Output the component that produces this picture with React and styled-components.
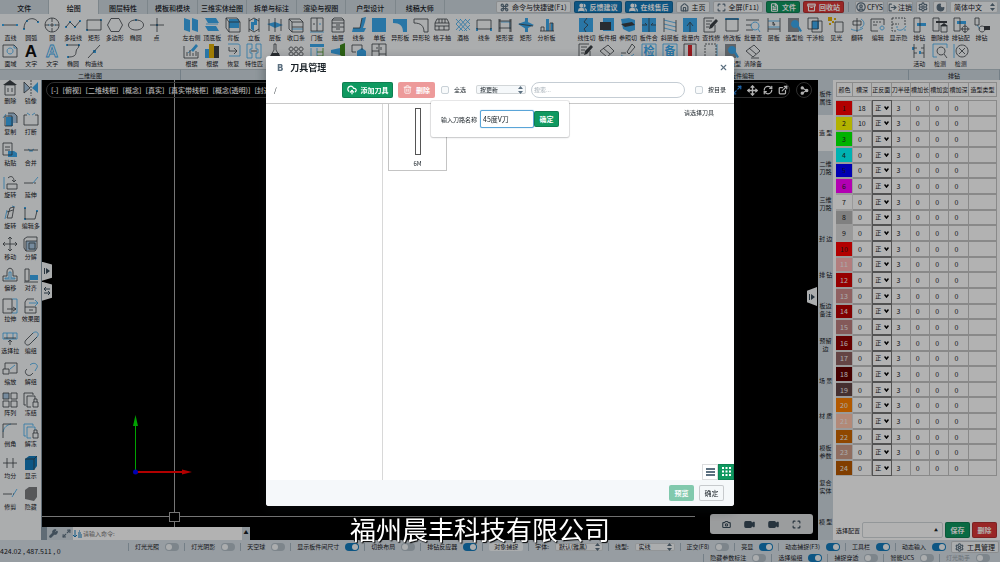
import { useState } from "react";
import styled, { createGlobalStyle, css } from "styled-components";
import {
    Command, House, Maximize, FileText, Archive, CircleUser, LogOut, Settings, Moon,
    Move, RefreshCw, ExternalLink, Share2, Wrench, Maximize2, Camera, Video,
    CloudUpload, Trash2, X, Users
} from "lucide-react";

const BLUE = "#3ba9ee";
const DARK = "#3b4045";

// k = dark stroke, b = blue stroke, fb = blue fill, fk = dark fill, t = letter
const icons = {
    line: { k: "M2 8H14", b: "M1 7v2M15 7v2", fb: "M0 7h2v2H0zM14 7h2v2h-2z" },
    arc: { k: "M1 12C1 1 11 -1 15 5", fb: "M0 11h2v2H0zM14 4h2v2h-2zM3 3h2v2H3z" },
    circle: { k: "M8 1a7 7 0 1 0 .1 0M8 1V5M8 11V15M1 8H5M11 8H15M6 8H10M8 6V10", b: "M4 8H6M10 8H12" },
    polyline: { k: "M1 10L5 5L10 10L15 4", fb: "M0 9h2v2H0zM4 4h2v2H4zM9 9h2v2H9zM14 3h2v2h-2z" },
    rect: { k: "M1 3H15V13H1Z", fb: "M0 12h2v2H0zM14 2h2v2h-2z" },
    hexagon: { k: "M4 1.500H12L15.500 8L12 14.500H4L.5 8Z" },
    ellipse: { k: "M8 3C-2 3 -2 13 8 13S18 3 8 3Z", fb: "M7 2h2v2H7z" },
    point: { k: "M1 8H15M8 1V15", fb: "M7 7h2v2H7z" },
    region: { k: "M1 2H12L15 5V14H1Z", b: "M8 5a3 3 0 1 0 .1 0M12 2V5H15" },
    textFill: { t: "A", tc: "#111" },
    textLine: { t: "A", tc: "none" },
    spline: { k: "M2 2H14C14 6 11 5 11 9S8 14 3 14", fb: "M1 1h2v2H1zM13 1h2v2h-2zM2 13h2v2H2z" },
    diagonal: { k: "M2 15L14 2", fb: "M7 7h3v3H7z" },
    sides: { fb: "M1 1L7 3V15L1 13ZM9 1L15 3V15L9 13Z" },
    topBottom: { fb: "M1 1H12L15 6H4ZM1 9H12L15 14H4Z", b: "M2 7H14" },
    back: { k: "M1 1H12L15 5V15H4L1 11ZM1 1L4 5H15M4 5V15", fb: "M4 2H14V11H4Z" },
    stand: { k: "M3 1V15M13 1V15M3 4L8 1L13 4M3 12L8 15L13 12", fb: "M5 5H8V14L5 12ZM8 2H11V8H8Z" },
    shelf: { k: "M2 2V14M14 2V14M8 1V15", fb: "M0 7L8 5L16 8L8 11Z" },
    closing: { k: "M1 2H12L15 5V15H4L1 12ZM4 5H15M4 5V15M1 2L4 5M4 10H15", b: "M4 12H15" },
    door: { k: "M2 1H14V14H2ZM8 1V14M4 7h2", b: "M10 7h2M1 15H15" },
    drawer: { k: "M2 3L4 1H12L14 3V15H2ZM2 6H14M2 10H14M6 8H10M6 12H10M2 3H14" },
    profile: { fb: "M11 1L15 0L14 5L12 11H15L13 15H1L2 11H9Z", k: "M11 1L9 11H2" },
    panel: { fb: "M1 1H15V15H1Z" },
    shaped: { fb: "M1 2H15V15H11C11 9 8 6 1 6Z" },
    shapedLine: { k: "M1 2H15V15H11C11 9 8 6 1 6Z" },
    lattice: { k: "M1 6L3 2H13L15 6V13H1ZM1 6H15M1 9H15M5 2V6M8 2V6M11 2V6M5 9v4M10 9v4" },
    wine: { b: "M1 2L12 14M5 2L15 13M10 2L15 7M1 7L8 14M15 2L4 14M11 2L1 13M6 2L1 7M15 8L9 14" },
    bar: { k: "M1 3H15V12H1Z", fb: "M0 11h2v3H0zM14 11h2v3h-2z" },
    frame: { k: "M2 2V15M14 2V15M2 11H14M2 4H14M3 2V15M13 2V15", b: "M4 5H13V12" },
    cross3d: { fb: "M0 7L8 4L16 8L8 12ZM7 1H10V15H7Z", k: "M1 7L15 9" },
    chart: { k: "M1 14H15M2 14V10H5V14M11 14V6H14V14", fb: "M7 2H10V14H7ZM12 6H14V14H12Z" },
    base: { k: "M1 3V15H15V9M4 9v4M7 7v6M10 10v3M13 8v5", b: "M5 10L14 2", fb: "M8 7L13 1L15 3L10 9Z" },
    bars: { fb: "M1 6H5V15H1Z", fk: "M10 3H15V15H10Z", fy: "M5 1H10V15H5Z" },
    restore: { k: "M4 4V8H12M9 5L12 8L9 11", b: "M3 1H13C15 1 15 3 15 3V13H4" },
    match: { b: "M1 1H6V6H4V10H6V15H1ZM15 1H10V6H12V10H10V15H15Z", k: "M5 8H11" },
    brush: { k: "M7 1H9V7L13 14H3L7 7Z", fk: "M5 10H12L13 14H3Z" },
    knots: { k: "M3 4a2 2 0 1 0 .1 0M8 4a2 2 0 1 0 .1 0M13 4a2 2 0 1 0 .1 0M3 9a2 2 0 1 0 .1 0M8 9a2 2 0 1 0 .1 0M13 9a2 2 0 1 0 .1 0" },
    shelves: { b: "M2 5V15M8 5V15", kg: "M14 5V15M8 9H14M8 13H14", fb: "M1 1H15V4H1Z" },
    green: { fb: "M1 7L10 5V12L1 10Z", fg: "M10 2L15 0V15L10 12Z" },
    cube: { k: "M1 2H11V7M1 2V9H5", fb: "M6 8L11 5L15 8V13L10 15L6 13Z" },
    cabinet: { k: "M1 1H15V15H1ZM8 1V15M1 8H8M8 11H15M10 4v3M6 4v2" },
    cutLine: { fb: "M1 1H15V15H1Z", k: "M9 1L6 5L10 8L6 12L8 15" },
    cutPart: { fb: "M4 1H15V14H4Z", fk: "M1 5H12V13H1Z" },
    cutRef: { fb: "M1 2L9 1L15 3V13L9 15L3 12Z", fk: "M1 7L12 5L15 8L5 10Z" },
    merge: { fb: "M1 1H15V15H1Z", k: "M1 8H6L4 6M15 8H10L12 6M8 1V15" },
    slope: { k: "M2 1V15M14 3V15", b: "M2 3L14 6M2 7L14 10M2 11L14 14" },
    batch: { fb: "M1 1H15V15H1Z", k: "M8 15V6M5 9L8 5L11 9" },
    edit: { k: "M12 8V15H1V1H11M3 4H9M3 7H7M3 10H6", fk: "M6 12L7 8L13 2L15 4L9 11Z" },
    modify: { k: "M2 2H14V14H2Z", fb: "M1 1H15V3H1Z" },
    find: { k: "M1 3H14M1 8H6M1 13H8", b: "M10 5a4 4 0 1 0 .1 0M13 12L15 15" },
    layers: { k: "M2 1V15M14 1V15M2 12H14M7 5L9 8H7Z", b: "M2 4H14M2 10H14" },
    modelCheck: { fg2: "M1 1H12V15H1Z", fb: "M8 3a4 4 0 1 0 .1 0M10 10L12 9L15 14L13 15Z" },
    clash: { k: "M1 1H11V12H1ZM5 4H15V15H5Z", fb: "M5 4H12V12H5Z" },
    light: { k: "M7 5H15V15H7Z", fy: "M0 0H4V4H0ZM6 1h2v2H6zM1 6h2v2H1zM4 4h2v2H4z" },
    flip: { k: "M8 1V15M4 4H12V8H4Z", b: "M2 12C5 14 11 14 14 11M12 2C17 5 15 10 11 11" },
    editBox: { k: "M1 2H14V8M1 2V14H8M3 5h2M6 5h2M9 5h2M3 8h4", b: "M12 9a2 2 0 1 0 .1 0" },
    showHide: { b: "M6 12C8 14 12 14 15 9M6 9v2M14 12v2", kd: "M1 1H14V8M1 1V14H5M1 7H8" },
    drill: { k: "M3 1H9V15H3Z", fb: "M6 6H15V9H6Z" },
    drillDel: { k: "M1 1H7V14H1ZM9 15H15V9H9Z", fk: "M4 4H15V6H4ZM8 9H16L12 6Z" },
    drillSet: { k: "M1 1H7V14H1ZM12 9a3 3 0 1 0 .1 0M12 7v9M7.500 12h9", fb: "M4 4H13V7H4Z" },
    drillArm: { k: "M1 1H5V8H1ZM8 9a3 3 0 1 0 .1 0", fk: "M10 9H16V13H10Z", b: "M3 8L6 12" },
    erase: { k: "M9 2L15 8L8 14L1 8ZM4 5L11 11M6 15H14" },
    scoop: { k: "M7 9L12 1L15 4L9 11ZM1 10H6M1 14H15", b: "M1 12C5 15 10 15 14 11" },
    checkChar: { t: "检", tc: BLUE, small: true, b: "M1 1H15V15H1Z" },
    noteChar: { t: "备", tc: BLUE, small: true, b: "M1 1H15V15H1Z" },
    redPart: { k: "M2 1H14V15H2Z", fr: "M6 2H10V14H6Z" },
    dotted: { kd: "M2 1H13V14H2Z", b: "M14 1V15" },
    rails: { k: "M3 1V15M13 1V15M3 5h3M3 10h3M10 5h3M10 10h3", fb: "M1 4h2v3H1zM8 8h2v3H8z" },
    scan: { b: "M1 1H15V5M1 1V14H5", k: "M9 4a4 4 0 1 0 .1 0M12 11L15 15" },
    ban: { k: "M9 2a6 6 0 1 0 .1 0M6 5L12 11M12 5L6 11", b: "M1 1V15" },
    trash: { k: "M3 5H13V15H3ZM6 8v4M10 8v4", fk: "M1 5H15L8 0Z" },
    mirror: { fl: "M1 2V13L7 8Z", k: "M1 2V13L7 8Z", kd: "M8 0V16", fb: "M15 2V13L9 8Z" },
    copy: { fl: "M6 2H12L15 5V12H11V6H6Z", k: "M6 2H12L15 5V12M3 5H10V15H3Z", fb: "M4 6H11V15H4Z", b: "M1 7L4 3" },
    breakIt: { k: "M4 4H1V14H15V4H12", b: "M4 2L7 4M12 2L9 4" },
    paste: { k: "M1 1H10V13H1ZM3 5h5M3 8h5", fb: "M6 9H12L15 11V15H6Z" },
    join: { k: "M1 8H15", b: "M5 7L8 9L11 7M6 9H10" },
    rotate: { k: "M5 10H15V15H5ZM6 4C9 1 12 3 12 7M10 6L12 8L14 6", b: "M2 3v12" },
    extend: { k: "M1 9H8", b: "M10 9L15 3", kd: "M8 9H13" },
    rotate3: { k: "M5 13L8 3L12 2L10 13ZM5 7L11 5", b: "M3 14L5 5M10 1L13 2" },
    editPoly: { k: "M2 3V14H12L14 6", fb: "M1 2h2v2H1zM1 13h2v2H1zM13 5h2v2h-2z" },
    move: { k: "M8 1V15M1 8H15M6 3L8 1L10 3M6 13L8 15L10 13M3 6L1 8L3 10M13 6L15 8L13 10" },
    explode: { k: "M1 3L4 1H14V12L12 15H3V5H14M1 3V12L3 15M6 7H12V13H6Z", fl: "M3 5H13V14H3Z" },
    offset: { k: "M1 14H15V9H11V5C11 0 5 0 5 5V9H1Z", b: "M3 12H13V11H9V5H7V11H3Z" },
    align: { k: "M2 2H6V14H2ZM1 15H15", fb: "M7 8H15V13H7Z" },
    stretch: { k: "M1 1H10V15H1ZM5 11H14M11 9L14 11L11 13", b: "M10 1H15V15H10" },
    render: { k: "M2 4L4 1H11M2 4V15H13V9M2 9H13M6 12h4", b: "M6 5H15M12 2L15 5L12 8" },
    pick: { b: "M1 3H15V9H1ZM5 3V9M11 3V9", k: "M8 10V15M6 12L8 10L10 12M2 8H14" },
    group: { k: "M10 3L3 10C0 13 4 17 7 14L14 7", b: "M10 3C14 0 17 4 14 7L10 11" },
    scale: { k: "M3 2H15V12H8M1 8H7V13H1ZM3 8V2", b: "M8 8L13 4" },
    ungroup: { k: "M4 8C0 11 4 16 8 14L10 12", b: "M7 4C11 0 17 4 13 8L12 10" },
    array: { k: "M9 1H15V7H9ZM1 9H7V15H1ZM9 9H15V15H9ZM1 1H7V7H1Z", fl: "M1 1H7V7H1Z" },
    freeze: { k: "M3 13H1V1H10V3M4 4H12V7M4 4V15H8M10 10H15V15H10ZM11 10V7H14V10" },
    chamfer: { k: "M1 15V6M6 1H15M1 6V1H6", b: "M1 9C2 4 5 2 9 1" },
    melt: { b: "M3 13H1V1H10V3M4 4H12V7M4 4V15H8", k: "M10 10H15V15H10ZM11 10V7H14V10" },
    divide: { k: "M1 8H15M5 3V13M11 3V13" },
    show: { fs: "M2 4L6 1H14V11L11 15H2Z", k: "M2 4H11V15M11 4L14 1" },
    trim: { k: "M1 8H8", b: "M10 11L15 3", kd: "M8 8H12" },
    hide: { fh: "M2 4L6 1H14V11L11 15L2 13Z" }
};

function ToolIcon({ name }) {
    const i = icons[name];
    return (
        <svg width="16" height="16" viewBox="0 0 16 16" fill="none" strokeWidth="0.8" overflow="visible" aria-hidden="true">
            {i.fl && <path d={i.fl} fill="#a9c8e2" />}
            {i.fg2 && <path d={i.fg2} fill="#8a9096" />}
            {i.fb && <path d={i.fb} fill={BLUE} />}
            {i.fs && <path d={i.fs} fill="#137cbd" />}
            {i.fy && <path d={i.fy} fill="#e2b007" />}
            {i.fg && <path d={i.fg} fill="#3f8a1c" />}
            {i.fr && <path d={i.fr} fill="#d8262c" />}
            {i.fh && <path d={i.fh} fill="#7b7d80" />}
            {i.fk && <path d={i.fk} fill={DARK} />}
            {i.b && <path d={i.b} stroke={BLUE} />}
            {i.k && <path d={i.k} stroke={DARK} />}
            {i.kg && <path d={i.kg} stroke="#3f8a1c" />}
            {i.kd && <path d={i.kd} stroke={DARK} strokeDasharray="2 1" />}
            {i.t && <Letter x="8" y={i.small ? 12 : 14} $small={i.small}
                fill={i.tc} stroke={i.tc === "none" ? BLUE : "none"}>{i.t}</Letter>}
        </svg>
    );
}

const tabs = ["文件", "绘图", "图层特性", "模板和模块", "三维实体绘图", "拆单与标注", "渲染与视图", "户型设计", "线稿大师"];

const ribbon = [
    {
        title: "二维绘图", cols: 8, pad: 14,
        tools: [
            ["直线", "line"], ["圆弧", "arc"], ["圆", "circle"], ["多段线", "polyline"], ["矩形", "rect"], ["多边形", "hexagon"], ["椭圆", "ellipse"], ["点", "point"],
            ["面域", "region"], ["文字", "textFill"], ["文字", "textLine"], ["椭圆", "spline"], ["构造线", "diagonal"]
        ]
    },
    {
        title: "", cols: 18, pad: 19,
        tools: [
            ["左右侧", "sides"], ["顶底板", "topBottom"], ["背板", "back"], ["立板", "stand"], ["层板", "shelf"], ["收口条", "closing"], ["门板", "door"], ["抽屉", "drawer"], ["线条", "profile"],
            ["单板", "panel"], ["异形板", "shaped"], ["异形轮", "shapedLine"], ["格子抽", "lattice"], ["酒格", "wine"], ["线条", "bar"], ["矩形变", "frame"], ["矩形", "cross3d"], ["分析板", "chart"],
            ["根据", "base"], ["根据", "bars"], ["恢复", "restore"], ["特性匹", "match"], ["", "brush"], ["", "knots"], ["", "shelves"], ["", "green"], ["", "cube"], ["", "cabinet"]
        ]
    },
    {
        title: "板件编辑", cols: 16, pad: 0,
        tools: [
            ["线性切", "cutLine"], ["板件相", "cutPart"], ["参照切", "cutRef"], ["板件合", "merge"], ["斜层板", "slope"], ["批量内", "batch"], ["查找修", "edit"], ["修改板", "modify"],
            ["批量查", "find"], ["层板", "layers"], ["造型检", "modelCheck"], ["干涉检", "clash"], ["见光", "light"], ["翻转", "flip"], ["编辑", "editBox"], ["显示隐", "showHide"],
            ["", "edit"], ["", "erase"], ["", "scoop"], ["", "checkChar"], ["", "noteChar"], ["", "redPart"], ["", "dotted"], ["改造型", "modelCheck"], ["清除备", "erase"]
        ]
    },
    {
        title: "排钻", cols: 4, pad: 8,
        tools: [
            ["排钻", "drill"], ["删除排", "drillDel"], ["排钻配", "drillSet"], ["排钻", "drillArm"],
            ["活动", "rails"], ["检测", "scan"], ["检测", "ban"]
        ]
    }
];

const sideTools = [
    ["删除", "trash"], ["镜像", "mirror"], ["复制", "copy"], ["打断", "breakIt"], ["粘贴", "paste"], ["合并", "join"], ["旋转", "rotate"],
    ["延伸", "extend"], ["旋转", "rotate3"], ["编辑多", "editPoly"], ["移动", "move"], ["分解", "explode"], ["偏移", "offset"], ["对齐", "align"],
    ["拉伸", "stretch"], ["效果图", "render"], ["选择拉", "pick"], ["编组", "group"], ["缩放", "scale"], ["解组", "ungroup"], ["阵列", "array"],
    ["冻结", "freeze"], ["倒角", "chamfer"], ["解冻", "melt"], ["均分", "divide"], ["显示", "show"], ["修剪", "trim"], ["隐藏", "hide"]
];

const views = ["[-]", "[俯视]", "[二维线框]", "[概念]", "[真实]", "[真实带线框]", "[概念(透明)]", "[封边]"];

const panelTabs = ["板件 属性", "造 型", "二维 刀路", "三维 刀路", "封 边", "排 钻", "板边 备注", "预留 边", "场 景", "材 质", "模板 参数", "复合 实体", "模 型"];

const heads = ["颜色", "槽深", "正反面", "刀半径", "槽加长", "槽加宽", "槽加深", "造型类型"];

const colors = [
    "#ff0000", "#ffff00", "#00ff00", "#00ffff", "#0000ff", "#ff00ff", "#ffffff", "#b8b8b8",
    "#dcdcdc", "#ff0000", "#ffb4b4", "#d70000", "#cd8c8c", "#b90000", "#bd8080", "#910000",
    "#906262", "#640000", "#644646", "#ff8000", "#ffc4ac", "#cd6600", "#cd9c88", "#b95a00"
];

function Toggle({ text, on, faded }) {
    return (
        <StatusItem $faded={faded}>
            {text}
            <Switch type="checkbox" role="switch" defaultChecked={on} disabled={faded} />
        </StatusItem>
    );
}

function Header() {
    return (
        <TopBar>
            <Tabs>
                {tabs.map((t, i) => <Tab key={t} $active={i === 1}>{t}</Tab>)}
            </Tabs>
            <TopActions>
                <TopButton><Command size={9} />命令与快捷键(F1)</TopButton>
                <TopButton $color="#137cbd"><Users size={9} fill="#fff" />反馈建议</TopButton>
                <TopButton $color="#137cbd"><Users size={9} fill="#fff" />在线售后</TopButton>
                <TopButton><House size={9} />主页</TopButton>
                <TopButton><Maximize size={9} />全屏(F11)</TopButton>
                <TopButton $color="#0f9960"><FileText size={9} />文件</TopButton>
                <TopButton $color="#db3737"><Archive size={9} />回收站</TopButton>
                <Divider />
                <TopButton $tight><CircleUser size={10} />CFYS</TopButton>
                <TopButton $tight><LogOut size={9} />注销</TopButton>
                <TopButton $tight aria-label="设置"><Settings size={10} /></TopButton>
                <TopButton $tight aria-label="夜间模式"><Moon size={9} fill="#5c7080" /></TopButton>
                <PickBox $w={48} $h={12} $size={7}>
                    <select aria-label="语言" defaultValue="简体中文"><option>简体中文</option></select>
                    <Arrows />
                </PickBox>
            </TopActions>
        </TopBar>
    );
}

function Arrows() {
    return (
        <svg width="5" height="8" viewBox="0 0 5 8" fill="#5c7080" aria-hidden="true">
            <path d="M0 3L2.500 0L5 3ZM0 5H5L2.500 8Z" />
        </svg>
    );
}

function Viewport() {
    return (
        <Canvas>
            <Drawing aria-hidden="true">
                <g stroke="#a8a8a8" fill="none" shapeRendering="crispEdges">
                    <path d="M132.500 0V432M132.500 442V460M0 436.500H127M138 436.500H653" />
                    <rect x="127.500" y="432.500" width="10" height="9" />
                </g>
                <path d="M93.500 392V346" stroke="#00e800" />
                <path d="M93.500 335L96 346H91Z" fill="#00e800" />
                <path d="M94 392H141" stroke="#ff0000" strokeWidth="2" />
                <path d="M150 392L140 389.500V394.500Z" fill="#ff0000" />
                <circle cx="93.500" cy="392" r="2.500" fill="#0000ff" />
            </Drawing>
            <ViewRow>
                <ViewPill>
                    {views.map((v) => <ViewButton key={v}>{v}</ViewButton>)}
                    <ViewIcons>
                        <Maximize2 size={10} color="#2b95ff" /><Move size={11} /><RefreshCw size={10} /><ExternalLink size={10} />
                    </ViewIcons>
                </ViewPill>
                <RoundButton aria-label="分享"><Share2 size={9} fill="#fff" /></RoundButton>
            </ViewRow>
            <Handles>
                <Handle aria-label="展开">
                    <svg width="6" height="8" viewBox="0 0 6 8"><path d="M0 1H1V7H0ZM2 1L6 4L2 7Z" fill="#394b59" /></svg>
                </Handle>
                <Handle aria-label="切换">
                    <svg width="6" height="8" viewBox="0 0 6 8">
                        <path d="M0 2H6M2 0L0 2L2 4M6 6H0M4 4L6 6L4 8" fill="none" stroke="#394b59" />
                    </svg>
                </Handle>
            </Handles>
            <Handles $right>
                <Handle $right aria-label="收起">
                    <svg width="6" height="8" viewBox="0 0 6 8"><path d="M0 1H1V7H0ZM2 1L6 4L2 7Z" fill="#394b59" /></svg>
                </Handle>
            </Handles>
            <CameraBar>
                <Camera size={9} /><Video size={11} fill="#394b59" /><Video size={11} fill="#394b59" /><Maximize size={9} />
            </CameraBar>
            <CommandBar>
                <CommandTools><Wrench size={9} fill="#5c7080" /><Maximize2 size={9} /></CommandTools>
                <svg width="9" height="9" viewBox="0 0 9 9" stroke="#137cbd" aria-hidden="true">
                    <path d="M2 1V8M0 6L2 8L4 6M6 2H7M5 4H8M5 6H9M5 8H9" fill="none" />
                </svg>
                <input aria-label="命令" placeholder="请输入命令:" />
                <CommandToggle>▲</CommandToggle>
            </CommandBar>
        </Canvas>
    );
}

function ToolPanel() {
    return (
        <Panel>
            <TableArea>
                <DataTable>
                    <colgroup>
                        <col style={{ width: "10.500%" }} />
                        {heads.slice(1, 7).map((h) => <col key={h} style={{ width: "12%" }} />)}
                        <col />
                    </colgroup>
                    <thead>
                        <tr>{heads.map((h) => <th key={h}><span>{h}</span></th>)}</tr>
                    </thead>
                    <tbody>
                        {colors.map((c, i) => (
                            <tr key={i}>
                                <ColorCell style={{ backgroundColor: c }} $light={i > 9}>{i + 1}</ColorCell>
                                <td>{i === 0 ? 18 : i === 1 ? 10 : 0}</td>
                                <SelectCell>
                                    <SideSelect>
                                        <select aria-label={"正反面" + (i + 1)} defaultValue="正"><option>正</option><option>反</option></select>
                                        <svg width="5" height="4" viewBox="0 0 5 4"><path d="M.5 .5L2.500 3L4.500 .5" fill="none" stroke="#000" strokeWidth="1.500" /></svg>
                                    </SideSelect>
                                </SelectCell>
                                <td>3</td><td>0</td><td>0</td><td>0</td><td></td>
                            </tr>
                        ))}
                    </tbody>
                </DataTable>
            </TableArea>
            <ConfigRow>
                <label htmlFor="config">选择配置</label>
                <Combo><input id="config" /><span>▲</span></Combo>
                <Button $color="#0f9960">保存</Button>
                <Button $color="#db3737">删除</Button>
            </ConfigRow>
        </Panel>
    );
}

function StatusBar() {
    return (
        <Status>
            <Coords>424.02 , 487.511 , 0</Coords>
            <StatusRows>
                <StatusRow>
                    <Toggle text="灯光光照" />
                    <Toggle text="灯光阴影" />
                    <Toggle text="天空球" />
                    <Toggle text="显示板件间尺寸" on />
                    <Toggle text="切换布局" />
                    <Toggle text="排钻反应器" on />
                    <StatusItem as="div"><SmallButton>对象捕捉</SmallButton></StatusItem>
                    <StatusItem>字体:
                        <PickBox $w={48} $h={8} $size={6}><select><option>默认(雅黑)</option></select><Arrows /></PickBox>
                    </StatusItem>
                    <StatusItem>线型:
                        <PickBox $w={40} $h={8} $size={6}><select><option>实线</option></select><Arrows /></PickBox>
                    </StatusItem>
                    <Toggle text="正交(F8)" />
                    <Toggle text="亮显" on />
                    <Toggle text="动态捕捉(F3)" on />
                    <Toggle text="工具栏" on />
                    <Toggle text="动态输入" on />
                    <TopButton><Settings size={9} />工具管理</TopButton>
                </StatusRow>
                <StatusRow $pad={5}>
                    <Toggle text="隐藏参数标注" />
                    <Toggle text="选择编组" on />
                    <Toggle text="捕捉穿透" />
                    <Toggle text="智能UCS" />
                    <Toggle text="灯光助手" faded />
                </StatusRow>
            </StatusRows>
        </Status>
    );
}

function ToolDialog() {
    const [name, setName] = useState("45度V刀");
    return (
        <Backdrop>
            <Dialog role="dialog" aria-label="刀具管理">
                <DialogHead>
                    <b>B</b>
                    <h1>刀具管理</h1>
                    <button aria-label="关闭"><X size={9} strokeWidth={3} /></button>
                </DialogHead>
                <DialogTools>
                    <Path>/</Path>
                    <Button $color="#0f9960" $w={51}><CloudUpload size={10} strokeWidth={3} />添加刀具</Button>
                    <Button $color="#db3737" $w={37} disabled><Trash2 size={9} />删除</Button>
                    <Check><input type="checkbox" />全选</Check>
                    <PickBox $w={50} $h={9} $size={6}>
                        <select aria-label="排序"><option>按更新</option></select><Arrows />
                    </PickBox>
                    <Search type="search" aria-label="搜索" placeholder="搜索..." />
                    <Check><input type="checkbox" />按目录</Check>
                </DialogTools>
                <DialogBody>
                    <Tree />
                    <Cards>
                        <Card>
                            <svg width="8" height="49" aria-hidden="true">
                                <rect x="1.500" y="1.500" width="5" height="46" fill="none" stroke="#555" />
                            </svg>
                            6M
                        </Card>
                    </Cards>
                    <Hint>请选择刀具</Hint>
                    <Popover>
                        <label htmlFor="toolName">输入刀路名称</label>
                        <input id="toolName" autoFocus value={name} onChange={(e) => setName(e.target.value)} />
                        <Button $color="#0f9960">确定</Button>
                    </Popover>
                    <ModeSwitch>
                        <ModeButton aria-label="列表">
                            <svg width="9" height="8" viewBox="0 0 9 8"><path d="M0 1H9M0 4H9M0 7H9" stroke="#5c7080" strokeWidth="2" /></svg>
                        </ModeButton>
                        <ModeButton $active aria-label="网格">
                            <svg width="9" height="9" viewBox="0 0 9 9">
                                <path d="M0 1H9M0 4.500H9M0 8H9" stroke="#fff" strokeWidth="2" strokeDasharray="2 1.500" />
                            </svg>
                        </ModeButton>
                    </ModeSwitch>
                </DialogBody>
                <DialogFoot>
                    <Button $color="#0f9960" disabled>预览</Button>
                    <Button>确定</Button>
                </DialogFoot>
            </Dialog>
        </Backdrop>
    );
}

export default function App() {
    return (
        <Page>
            <Global />
            <Header />
            <Ribbon>
                {ribbon.map((g, n) => (
                    <Group key={n}>
                        <Tools $cols={g.cols} $pad={g.pad}>
                            {g.tools.map(([label, icon], i) => (
                                <Tool key={i}><ToolIcon name={icon} /><span>{label}</span></Tool>
                            ))}
                        </Tools>
                        <GroupTitle>{g.title}</GroupTitle>
                    </Group>
                ))}
            </Ribbon>
            <Main>
                <Side>
                    {sideTools.map(([label, icon], i) => (
                        <Tool key={i}><ToolIcon name={icon} /><span>{label}</span></Tool>
                    ))}
                </Side>
                <Viewport />
                <PanelTabs>
                    {panelTabs.map((t, i) => <PanelTab key={t} $active={i === 1} $wide={t.length === 3 && t[1] === " "}>{t}</PanelTab>)}
                </PanelTabs>
                <ToolPanel />
            </Main>
            <StatusBar />
            <ToolDialog />
            <Caption>福州晨丰科技有限公司</Caption>
        </Page>
    );
}

const Global = createGlobalStyle`
    * {
        box-sizing: border-box;
    }
    body {
        margin: 0;
        background: #000;
    }
    body, button, input, select {
        font-family: "Noto Sans CJK SC", "Noto Sans", sans-serif;
        font-size: 6px;
        color: #182026;
    }
    button {
        padding: 0;
        border: 0;
        background: none;
        white-space: nowrap;
    }
    svg {
        flex: none;
    }
`
const Letter = styled.text`
    font-family: "Liberation Sans", "Noto Sans CJK SC", sans-serif;
    font-size: ${(props) => props.$small ? "11px" : "17px"};
    font-weight: 700;
    text-anchor: middle;
`
const Page = styled.div`
    display: flex;
    flex-direction: column;
    height: 100vh;
    overflow: hidden;
`
const TopBar = styled.header`
    display: flex;
    justify-content: space-between;
    height: 14px;
    background: #ced9e0;
`
const Tabs = styled.nav`
    display: flex;
    width: 44.5%;
`
const Tab = styled.button`
    flex: 1;
    padding-top: 2px;
    font-size: 7px;
    font-weight: 500;
    line-height: 10px;
    border-right: 1px solid #b4c0c8;
    background: ${(props) => props.$active ? "#f5f8fa" : "none"};
`
const TopActions = styled.div`
    display: flex;
    align-items: center;
    gap: 3px;
    padding-right: 2px;
`
const TopButton = styled.button`
    display: flex;
    align-items: center;
    justify-content: center;
    gap: ${(props) => props.$tight ? "1px" : "3px"};
    height: 12px;
    min-width: 14px;
    padding: 0 ${(props) => props.$tight ? "1px" : "4px"};
    font-size: 7px;
    font-weight: ${(props) => props.$color ? 700 : 400};
    color: ${(props) => props.$color ? "#fff" : "#182026"};
    background: ${(props) => props.$color || "#f5f8fa"};
    border-radius: 2px;
    box-shadow: inset 0 0 0 1px rgba(16, 22, 26, 0.2);
    svg {
        stroke-width: 3px;
        color: ${(props) => props.$color ? "#fff" : "#5c7080"};
    }
`
const Divider = styled.span`
    width: 1px;
    height: 10px;
    margin: 0 3px 0 1px;
    background: #a7b6c2;
`
const PickBox = styled.span`
    position: relative;
    display: inline-flex;
    width: ${(props) => props.$w}px;
    height: ${(props) => props.$h}px;
    select {
        appearance: none;
        width: 100%;
        padding: 0 8px 0 4px;
        font-size: ${(props) => props.$size}px;
        line-height: ${(props) => props.$h}px;
        border: 0;
        border-radius: 2px;
        background: #f5f8fa;
        box-shadow: inset 0 0 0 1px rgba(16, 22, 26, 0.15);
    }
    svg {
        position: absolute;
        right: 3px;
        top: 50%;
        margin-top: -4px;
        pointer-events: none;
    }
`
const Ribbon = styled.section`
    display: grid;
    grid-template-columns: 181fr 395fr 333fr 91fr;
    background: #f5f8fa;
`
const Group = styled.div`
    min-width: 0;
`
const Tools = styled.div`
    display: grid;
    grid-template-columns: repeat(${(props) => props.$cols}, minmax(0, 1fr));
    grid-auto-rows: 26px;
    height: 55px;
    padding: 3px ${(props) => props.$pad}px 0 0;
`
const Tool = styled.button`
    display: flex;
    flex-direction: column;
    align-items: center;
    min-width: 0;
    span {
        line-height: 10px;
    }
`
const GroupTitle = styled.div`
    height: 11px;
    line-height: 11px;
    text-align: center;
    background: #ced9e0;
    border-top: 1px solid #b8c4cc;
    border-right: 1px solid #a7b6c2;
`
const Main = styled.main`
    display: flex;
    flex: 1;
    min-height: 0;
`
const Side = styled.aside`
    display: grid;
    grid-template-columns: 1fr 1fr;
    grid-template-rows: repeat(14, minmax(0, 1fr));
    width: 42px;
    padding-bottom: 23px;
    background: #f5f8fa;
    border-right: 1px solid #8a9ba8;
`
const Canvas = styled.section`
    position: relative;
    flex: 1;
    min-width: 0;
    background: #000;
`
const Drawing = styled.svg`
    position: absolute;
    inset: 0;
    width: 100%;
    height: 100%;
`
const ViewRow = styled.div`
    position: relative;
    display: flex;
    gap: 6px;
    padding: 2px 6px 0 4px;
`
const ViewPill = styled.div`
    display: flex;
    align-items: center;
    flex: 1;
    gap: 4px;
    height: 16px;
    padding: 0 1px 0 4px;
    border: 1px solid #444;
    border-radius: 8px;
`
const ViewButton = styled.button`
    font-size: 7px;
    font-weight: 500;
    color: #fff;
`
const ViewIcons = styled.div`
    display: flex;
    align-items: center;
    gap: 5px;
    margin-left: auto;
    color: #fff;
    svg {
        stroke-width: 3px;
    }
`
const RoundButton = styled.button`
    display: flex;
    align-items: center;
    justify-content: center;
    width: 16px;
    height: 16px;
    color: #fff;
    border: 1px solid #444;
    border-radius: 8px;
    svg {
        stroke-width: 3px;
        transform: rotate(180deg);
    }
`
const Handles = styled.div`
    position: absolute;
    top: ${(props) => props.$right ? "45%" : "39.5%"};
    ${(props) => props.$right ? "right: 1px;" : "left: 0;"}
    display: flex;
    flex-direction: column;
    gap: 1px;
`
const Handle = styled.button`
    display: flex;
    align-items: center;
    justify-content: center;
    width: 10px;
    height: 19px;
    background: #f5f8fa;
    clip-path: ${(props) => props.$right
        ? "polygon(0 20%, 100% 0, 100% 100%, 0 80%)"
        : "polygon(0 0, 100% 15%, 100% 85%, 0 100%)"};
`
const CameraBar = styled.div`
    position: absolute;
    right: 5px;
    bottom: 6px;
    display: flex;
    align-items: center;
    justify-content: space-around;
    width: 103px;
    height: 20px;
    padding: 0 5px;
    color: #394b59;
    background: #dfe1e3;
    border-radius: 3px;
    svg {
        stroke-width: 3px;
    }
`
const CommandBar = styled.div`
    position: absolute;
    left: 0;
    bottom: 0;
    display: flex;
    align-items: center;
    width: 208px;
    height: 13px;
    background: #fff;
    border-left: 5px solid #8a9ba8;
    input {
        flex: 1;
        min-width: 0;
        padding: 0 1px;
        border: 0;
        background: none;
    }
`
const CommandToggle = styled.button`
    width: 8px;
    height: 100%;
    padding-bottom: 4px;
    font-size: 5px;
    line-height: 8px;
    background: #ced9e0;
`
const CommandTools = styled.div`
    display: flex;
    align-items: center;
    justify-content: space-around;
    width: 26px;
    height: 100%;
    color: #5c7080;
    background: #ced9e0;
    svg {
        stroke-width: 3px;
    }
`
const PanelTabs = styled.nav`
    display: flex;
    flex-direction: column;
    width: 15px;
    background: #ced9e0;
`
const PanelTab = styled.button`
    flex: 1;
    padding: 0 1px;
    line-height: 8px;
    white-space: ${(props) => props.$wide ? "nowrap" : "normal"};
    background: ${(props) => props.$active ? "#f5f8fa" : "none"};
`
const Panel = styled.aside`
    display: flex;
    flex-direction: column;
    justify-content: space-between;
    width: 167px;
    padding: 2px 3px;
    background: #fff;
`
const TableArea = styled.div`
    height: calc(100% - 62px);
`
const DataTable = styled.table`
    width: 100%;
    height: 100%;
    table-layout: fixed;
    border-collapse: separate;
    border-spacing: 0;
    th {
        height: 18px;
        padding: 0;
        font-weight: 400;
        vertical-align: top;
    }
    th span {
        display: block;
        height: 15px;
        line-height: 14px;
        white-space: nowrap;
        border: solid #c8c8c8;
        border-width: 1px 1px 1px 0;
    }
    th:first-child span {
        border-left-width: 1px;
    }
    td {
        padding: 0 0 0 5px;
        font-size: 7px;
        line-height: 10px;
        border: solid #c4c4c4;
        border-width: 1px 1px 1px 0;
    }
`
const ColorCell = styled.td`
    && {
        padding: 0;
        text-align: center;
        border-color: #ddd;
    }
    color: ${(props) => props.$light ? "#f5f5f5" : "#222"};
`
const SelectCell = styled.td`
    && {
        padding: 0;
        border: 1px solid #767676;
    }
`
const SideSelect = styled.div`
    position: relative;
    select {
        display: block;
        appearance: none;
        width: 100%;
        padding: 0 0 0 2px;
        line-height: 10px;
        border: 0;
        background: none;
    }
    svg {
        position: absolute;
        right: 2px;
        top: 3px;
        pointer-events: none;
    }
`
const ConfigRow = styled.div`
    display: flex;
    align-items: center;
    gap: 2px;
    white-space: nowrap;
`
const Combo = styled.span`
    display: flex;
    align-items: center;
    flex: 1;
    min-width: 0;
    height: 16px;
    padding-right: 4px;
    font-size: 4px;
    border: 1px solid #d3d8dc;
    border-radius: 2px;
    input {
        flex: 1;
        min-width: 0;
        border: 0;
        background: none;
    }
`
const Button = styled.button`
    display: flex;
    align-items: center;
    justify-content: center;
    gap: 4px;
    flex: none;
    width: ${(props) => props.$w || 25}px;
    height: 16px;
    font-size: 7px;
    border-radius: 2px;
    box-shadow: inset 0 0 0 1px rgba(16, 22, 26, 0.2);
    ${(props) => props.$color && css`
        font-weight: 700;
        color: #fff;
        background: ${props.$color};
    `}
    &:disabled {
        opacity: 0.5;
        box-shadow: none;
    }
`
const Status = styled.footer`
    display: flex;
    justify-content: space-between;
    height: 22px;
    background: #d8e1e8;
`
const Coords = styled.span`
    font-size: 7px;
    line-height: 23px;
    white-space: nowrap;
`
const StatusRows = styled.div`
    display: flex;
    flex-direction: column;
`
const StatusRow = styled.div`
    display: flex;
    align-items: center;
    justify-content: flex-end;
    height: ${(props) => props.$pad ? "8px" : "14px"};
    padding-right: ${(props) => props.$pad || 1}px;
`
const StatusItem = styled.label`
    display: flex;
    align-items: center;
    gap: 6px;
    padding: 0 5px 0 6px;
    line-height: 8px;
    white-space: nowrap;
    border-left: 1px solid #a7b6c2;
    color: ${(props) => props.$faded ? "#98a3ab" : "#182026"};
`
const Switch = styled.input`
    appearance: none;
    width: 14px;
    height: 8px;
    margin: 0;
    padding: 1px;
    border-radius: 4px;
    background: #b3bfc8;
    &::before {
        content: "";
        display: block;
        width: 6px;
        height: 6px;
        border-radius: 3px;
        background: #f5f8fa;
    }
    &:checked {
        background: #137cbd;
    }
    &:checked::before {
        margin-left: 6px;
    }
`
const SmallButton = styled.button`
    width: 34px;
    height: 8px;
    line-height: 8px;
    border-radius: 2px;
    background: #f5f8fa;
`
const Backdrop = styled.div`
    position: fixed;
    inset: 0;
    display: flex;
    justify-content: center;
    align-items: center;
    background: rgba(0, 0, 0, 0.3);
`
const Dialog = styled.section`
    display: flex;
    flex-direction: column;
    width: 468px;
    height: 80vh;
    overflow: hidden;
    background: #fff;
    border-radius: 3px;
    box-shadow: 0 4px 12px rgba(16, 22, 26, 0.4);
`
const DialogHead = styled.div`
    display: flex;
    align-items: center;
    gap: 7px;
    height: 22px;
    padding: 0 6px 0 11px;
    b {
        font-size: 9px;
        font-weight: 900;
        color: #5c7080;
    }
    h1 {
        flex: 1;
        margin: 0;
        font-size: 9px;
        font-weight: 700;
    }
    button {
        height: 9px;
        color: #5c7080;
    }
`
const DialogTools = styled.div`
    display: flex;
    align-items: center;
    gap: 5px;
    height: 26px;
    padding: 0 8px 2px;
    border-bottom: 1px solid #c8c8c8;
`
const Path = styled.span`
    width: 63px;
    font-size: 7px;
`
const Check = styled.label`
    display: flex;
    align-items: center;
    gap: 5px;
    margin: 0 5px 0 1px;
    white-space: nowrap;
    input {
        appearance: none;
        width: 8px;
        height: 8px;
        margin: 0;
        border: 1px solid #c9d1d7;
        border-radius: 2px;
        background: #f8fafb;
    }
    &:last-child {
        margin: 0 0 0 5px;
    }
`
const Search = styled.input`
    flex: 1;
    min-width: 0;
    height: 16px;
    padding: 0 2px;
    border: 1px solid #c5cdd4;
    border-radius: 8px;
    &::placeholder {
        color: #a7b0b8;
    }
`
const DialogBody = styled.div`
    position: relative;
    display: flex;
    flex: 1;
    min-height: 0;
`
const Tree = styled.div`
    width: 117px;
    border-right: 1px solid #d8d8d8;
`
const Cards = styled.div`
    flex: 1;
    padding-left: 5px;
`
const Card = styled.div`
    display: flex;
    flex-direction: column;
    align-items: center;
    justify-content: space-between;
    width: 59px;
    height: 67px;
    padding: 3px 0 2px;
    border: 1px solid #c4c4c4;
    border-top: 0;
`
const Hint = styled.div`
    padding: 4px 20px 0 0;
`
const Popover = styled.form`
    position: absolute;
    top: -3px;
    left: 165px;
    display: flex;
    align-items: center;
    width: 138px;
    height: 36px;
    padding: 0 10px;
    background: #fff;
    border-radius: 2px;
    box-shadow: 0 0 0 1px rgba(16, 22, 26, 0.1), 0 1px 2px rgba(16, 22, 26, 0.15);
    label {
        white-space: nowrap;
    }
    input {
        flex: 1;
        min-width: 0;
        height: 18px;
        margin-left: 3px;
        padding: 0 2px;
        font-size: 7px;
        border: 1px solid #5aa5d8;
        border-radius: 2px;
        outline: 0;
        box-shadow: 0 0 1px #5aa5d8;
    }
`
const ModeSwitch = styled.div`
    position: absolute;
    right: 0;
    bottom: 0;
    display: flex;
`
const ModeButton = styled.button`
    display: flex;
    align-items: center;
    justify-content: center;
    width: 16px;
    height: 16px;
    background: ${(props) => props.$active ? "#0f9960" : "#fff"};
    box-shadow: inset 0 0 0 1px rgba(16, 22, 26, 0.15);
`
const DialogFoot = styled.div`
    display: flex;
    align-items: center;
    justify-content: flex-end;
    gap: 5px;
    height: 26px;
    padding-right: 10px;
    background: #f5f8fa;
`
const Caption = styled.p`
    position: fixed;
    left: 48%;
    bottom: 15px;
    margin: 0;
    transform: translateX(-50%);
    font-size: 26px;
    line-height: 36px;
    white-space: nowrap;
    color: #fff;
    text-shadow: 0 0 1px #000, 1px 1px 1px #000, -1px -1px 1px #000;
`
